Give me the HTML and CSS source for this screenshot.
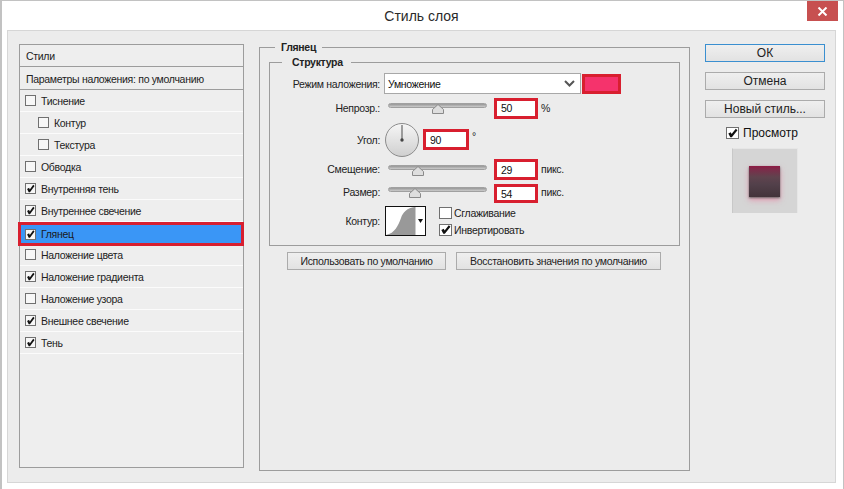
FILE: index.html
```html
<!DOCTYPE html>
<html lang="ru">
<head>
<meta charset="utf-8">
<title>Стиль слоя</title>
<link rel="stylesheet" href="styles.css">
</head>
<body>
<svg class="defs" width="0" height="0"><symbol id="thumb" viewBox="0 0 12 10"><path d="M6 .5L11.5 5.5V9.5H.5V5.5Z" fill="#dedede" stroke="#8a8a8a"/></symbol></svg>
<div class="window">
  <div class="titlebar">
    <span class="title">Стиль слоя</span>
    <div class="close"><svg width="11" height="9" viewBox="0 0 11 9"><path d="M1.5 0.5L9.5 8.5M9.5 0.5L1.5 8.5" stroke="#fff" stroke-width="2" fill="none"/></svg></div>
  </div>
  <div class="panel">
    <div class="list">
      <div class="list-head">Стили</div>
      <div class="list-head blend">Параметры наложения: по умолчанию</div>
      <div class="item"><span class="cb"></span>Тиснение</div>
      <div class="item sub"><span class="cb"></span>Контур</div>
      <div class="item sub"><span class="cb"></span>Текстура</div>
      <div class="item"><span class="cb"></span>Обводка</div>
      <div class="item"><span class="cb on"></span>Внутренняя тень</div>
      <div class="item"><span class="cb on"></span>Внутреннее свечение</div>
      <div class="item selected"><span class="cb on"></span>Глянец</div>
      <div class="item"><span class="cb"></span>Наложение цвета</div>
      <div class="item"><span class="cb on"></span>Наложение градиента</div>
      <div class="item"><span class="cb"></span>Наложение узора</div>
      <div class="item"><span class="cb on"></span>Внешнее свечение</div>
      <div class="item"><span class="cb on"></span>Тень</div>
    </div>

    <div class="group outer">
      <div class="legend outer-legend">Глянец</div>
      <div class="group inner">
        <div class="legend inner-legend">Структура</div>
        <div class="row r-mode">
          <span class="label">Режим наложения:</span>
          <div class="select"><span>Умножение</span><svg width="11" height="7" viewBox="0 0 11 7"><path d="M1 1L5.5 5.5L10 1" stroke="#555" stroke-width="2" fill="none"/></svg></div>
          <div class="swatch"></div>
        </div>
        <div class="row r-opacity">
          <span class="label lift">Непрозр.:</span>
          <div class="slider s-opacity"><svg class="thumb" style="left:43px"><use href="#thumb"/></svg></div>
          <div class="num">50</div><span class="unit lift">%</span>
        </div>
        <div class="row r-angle">
          <span class="label">Угол:</span>
          <div class="dial"><svg width="36" height="36" viewBox="0 0 36 36"><defs><linearGradient id="dg" x1="0" y1="0" x2="0" y2="1"><stop offset="0" stop-color="#f6f6f6"/><stop offset="1" stop-color="#cfcfcf"/></linearGradient></defs><circle cx="18" cy="18" r="16.5" fill="url(#dg)" stroke="#8c8c8c"/><path d="M18 3V18" stroke="#666" stroke-width="1.2"/><circle cx="18" cy="18" r="1.7" fill="#444"/></svg></div>
          <div class="num wide">90</div><span class="unit deg">°</span>
        </div>
        <div class="row r-offset">
          <span class="label lift">Смещение:</span>
          <div class="slider s-offset"><svg class="thumb" style="left:23px"><use href="#thumb"/></svg></div>
          <div class="num">29</div><span class="unit lift">пикс.</span>
        </div>
        <div class="row r-size">
          <span class="label lift2">Размер:</span>
          <div class="slider s-size"><svg class="thumb" style="left:20px"><use href="#thumb"/></svg></div>
          <div class="num short">54</div><span class="unit lift2">пикс.</span>
        </div>
        <div class="row r-contour">
          <span class="label">Контур:</span>
          <div class="contour"><svg width="41" height="30" viewBox="0 0 41 30"><rect x="0.5" y="0.5" width="40" height="29" fill="#fff" stroke="#111"/><path d="M1 29C10 27 13 20 16 12C18 6 22 2 30 1V29Z" fill="#999"/><path d="M30 1V29" stroke="#999"/><path d="M33 13H38L35.5 17Z" fill="#111"/></svg></div>
          <div class="options">
            <div class="opt"><span class="cb big"></span>Сглаживание</div>
            <div class="opt"><span class="cb big on"></span>Инвертировать</div>
          </div>
        </div>
      </div>
      <div class="defaults">
        <div class="btn b-use">Использовать по умолчанию</div>
        <div class="btn b-reset">Восстановить значения по умолчанию</div>
      </div>
    </div>

    <div class="side">
      <div class="btn main primary">ОК</div>
      <div class="btn main">Отмена</div>
      <div class="btn main">Новый стиль...</div>
      <div class="preview-check"><span class="cb big on"></span>Просмотр</div>
      <div class="preview"><div class="preview-square"></div></div>
    </div>
  </div>
</div>
</body>
</html>
```
FILE: styles.css
```css
* { box-sizing: border-box; }
html, body { margin: 0; padding: 0; background: #fff; }
body { font-family: "Liberation Sans", "Noto Sans", sans-serif; font-size: 10.5px; letter-spacing: -.3px; color: #222; }
.defs { display: block; height: 0; }
.window {
  width: 844px; height: 489px; overflow: hidden;
  border: 1px solid #c2c2c2; border-width: 1px 1px 0 2px; background: #fff;
}
.titlebar { height: 29px; display: flex; justify-content: center; align-items: center; position: relative; }
.title { font-size: 14px; letter-spacing: 0; color: #2a2a2a; margin-left: -2px; margin-top: 1px; }
.close {
  position: absolute; right: 5px; top: 0; width: 31px; height: 20px; background: #c75050;
  display: flex; align-items: center; justify-content: center;
}
.panel {
  margin-left: 5px; width: 829px; height: 453px; background: #ececec;
  border: 1px solid #d6d6d6;
  padding: 13px 0 0 11px; display: flex; align-items: flex-start;
}
.list { width: 225px; height: 424px; border: 1px solid #9c9c9c; background: #eee; }
.list-head { height: 22px; border-bottom: 1px solid #9c9c9c; padding-left: 6px; display: flex; align-items: center; }
.list-head.blend { margin-top: 1px; }
.item { height: 22px; border-bottom: 1px solid #fbfbfb; display: flex; align-items: center; padding-left: 5px; }
.item.sub { padding-left: 18px; }
.item.selected {
  height: 24px; margin: 0 -1px -2px -2px; padding-left: 4px; position: relative; z-index: 1;
  background: #3a96f6; border: 3px solid #d81f2f; color: #1a1a1a;
}
.cb {
  width: 11px; height: 11px; margin-right: 5px; flex: none; position: relative;
  border: 1px solid #707070; background: #f7f7f7; display: inline-block;
}
.cb.big { width: 13px; height: 12px; margin-right: 2px; background: #fff; }
.cb.on::after {
  content: ""; position: absolute; inset: 0; background: #111;
  clip-path: polygon(12% 55%, 34% 42%, 42% 60%, 80% 8%, 95% 22%, 44% 92%, 30% 92%);
}
.group { border: 1px solid #9c9c9c; }
.outer { width: 431px; height: 424px; margin: 3px 0 0 15px; padding: 0 9px; }
.legend { width: fit-content; background: #ececec; font-weight: 700; line-height: 12px; }
.outer-legend { margin: -7px 0 9px 6px; height: 12px; padding: 0 6px; }
.inner-legend { margin: -7px 0 6px 11px; height: 11px; padding: 0 8px 0 10px; }
.inner { height: 184px; padding-left: 1px; }
.row { display: flex; align-items: center; }
.label { width: 109px; text-align: right; flex: none; }
.r-mode { height: 21px; }
.select {
  width: 197px; height: 21px; margin-left: 4px; background: #fff; border: 1px solid #a8a8a8;
  display: flex; align-items: center; justify-content: space-between; padding: 0 5px 0 3px; color: #111;
}
.swatch { width: 39px; height: 20px; margin-left: 1px; background: #f5336c; border: 3px solid #d81f2f; }
.r-opacity { height: 20px; margin-top: 4px; }
.r-angle { height: 21px; margin-top: 11px; }
.r-offset { height: 21px; margin-top: 9px; }
.r-size { height: 19px; margin-top: 4px; }
.r-contour { height: 30px; margin-top: 3px; }
.lift { margin-top: -1px; }
.lift2 { margin-top: -3px; }
.slider {
  width: 99px; height: 5px; margin-left: 8px; margin-right: 7px; align-self: flex-start; position: relative;
  background: linear-gradient(#979797, #cbcbcb); border: 1px solid #a0a0a0; border-radius: 3px;
}
.s-opacity { margin-top: 5px; }
.s-offset { margin-top: 6px; }
.s-size { margin-top: 3px; }
.thumb { position: absolute; top: 0; width: 12px; height: 10px; }
.num {
  width: 44px; height: 21px; background: #fff; border: 3px solid #d81f2f; color: #111;
  display: flex; align-items: center; padding-left: 4px; flex: none;
}
.num.short { height: 19px; }
.num.wide { width: 46px; margin-left: 3px; }
.unit { margin-left: 3px; }
.deg { margin-top: -8px; }
.dial { width: 36px; height: 36px; margin-left: 4px; flex: none; }
.contour { width: 41px; height: 30px; margin-left: 5px; flex: none; }
.options { margin-left: 13px; display: flex; flex-direction: column; gap: 5px; }
.opt { display: flex; align-items: center; height: 12px; }
.defaults { display: flex; gap: 10px; margin: 6px 0 0 18px; }
.btn {
  height: 18px; display: flex; align-items: center; justify-content: center;
  background: linear-gradient(#efefef, #e2e2e2); border: 1px solid #ababab; color: #222;
}
.b-use { width: 159px; }
.b-reset { width: 205px; }
.side { width: 120px; margin-left: 15px; display: flex; flex-direction: column; font-size: 12px; letter-spacing: 0; color: #111; }
.btn.main { margin-bottom: 10px; }
.btn.primary { border-color: #3a8fd0; }
.preview-check { display: flex; align-items: center; margin: -5px 0 0 21px; height: 20px; }
.preview-check .cb { margin-right: 4px; }
.preview {
  width: 66px; height: 65px; margin: 5px 0 0 27px; background: #d5d5d5;
  border: 1px solid #e6e6e6; border-bottom: 0; border-left-color: #c8c8c8;
  display: flex; padding: 17px 0 0 16px;
}
.preview-square {
  width: 31px; height: 31px;
  background: linear-gradient(#8e1b44 0, #7b2d4a 12%, #60434e 35%, #52404a 60%, #43333a 100%);
  box-shadow: 0 1px 2px #666, 0 3px 6px rgba(235, 110, 150, .6);
}
```
